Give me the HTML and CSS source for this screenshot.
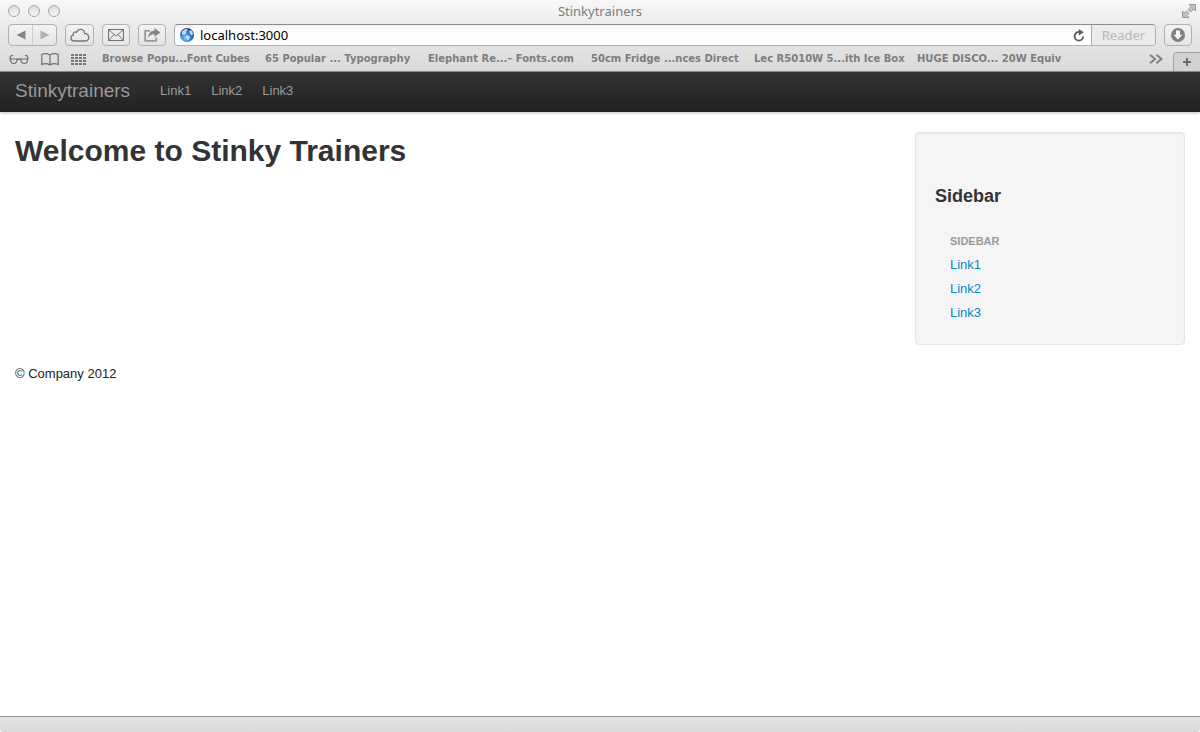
FILE: index.html
```html
<!DOCTYPE html>
<html lang="en">
<head>
<meta charset="utf-8">
<title>Stinkytrainers</title>
<link rel="stylesheet" href="styles.css">
</head>
<body>
<div class="window">
  <div class="chrome">
    <div class="titlebar">
      <div class="lights">
        <button class="light" aria-label="Close"></button>
        <button class="light" aria-label="Minimise"></button>
        <button class="light" aria-label="Zoom"></button>
      </div>
      <div class="window-title">Stinkytrainers</div>
      <button class="icon-button fullscreen" aria-label="Full screen">
        <svg width="16" height="16" viewBox="0 0 16 16" fill="#c0c0c0" stroke="#8c8c8c" stroke-width=".8"><path d="M8 1.500h6.500V8l-2-2-3 3L7 6.500l3-3zM1.500 8l2 2 2-2L8 10.500l-2 2 2 2H1.500z"/></svg>
      </button>
    </div>
    <div class="toolbar">
      <div class="history">
        <button class="nav-button" aria-label="Back"><svg width="10" height="10" viewBox="0 0 10 10"><path d="M9.500.5v9L.5 5z" fill="#858585"/></svg></button>
        <button class="nav-button next" aria-label="Forward"><svg width="10" height="10" viewBox="0 0 10 10"><path d="M.5.5v9l9-4.500z" fill="#b2b2b2"/></svg></button>
      </div>
      <button class="tool cloud" aria-label="iCloud tabs"><svg width="20" height="14" viewBox="0 0 20 14" fill="none" stroke="#777" stroke-width="1.300"><path d="M4.500 13C.2 13-.2 7.800 3.300 7.200 2.700 4.700 5 3.300 6.600 4.300 8 .2 14.300.300 14.500 5.300c4.400.1 6.600 7 .7 7.700z"/></svg></button>
      <button class="tool mail" aria-label="Mail"><svg width="16" height="12" viewBox="0 0 16 12" fill="none" stroke="#757575"><path d="M.5.5h15v11H.5z" stroke-width="1.200"/><path d="M1 1l7 6 7-6M1 11l5-5.500M15 11l-5-5.500"/></svg></button>
      <button class="tool share" aria-label="Share"><svg width="17" height="14" viewBox="0 0 17 14"><path d="M6 2.800H1.200v10h11V9.500" fill="none" stroke="#999" stroke-width="1.800"/><path d="M10.500 0l6 4.500-6 4.300V6.300C7.800 6.200 5.800 7.200 4.300 10 4.300 5.500 6.600 2.500 10.500 2.400z" fill="#858585"/></svg></button>
      <div class="address">
        <svg class="globe" width="14" height="14" viewBox="0 0 14 14">
          <defs><radialGradient id="sea" cx=".4" cy=".7" r=".65"><stop offset="0" stop-color="#7ccbfb"/><stop offset=".6" stop-color="#2f7bd2"/><stop offset="1" stop-color="#183f91"/></radialGradient></defs>
          <circle cx="7" cy="7" r="7" fill="url(#sea)"/><path d="M2 3.500Q4.500.5 7 1l1 1.500-2 1 .5 1.500-2.500 2-2-1zM9 3l2-1q2 2 2 4.500l-1.500 1-1.500-2zM6 7.500l3 .5 1 1.500L8 12.500l-1.500-2z" fill="#dcecf6" opacity=".85"/>
        </svg>
        <input class="url" type="text" value="localhost:3000" aria-label="Address">
        <button class="icon-button reload" aria-label="Reload"><svg width="12" height="13" viewBox="0 0 12 13"><path d="M7 3H5.500A4.300 4.300 0 1 0 10.200 7.500" fill="none" stroke="#5c5c5c" stroke-width="1.900"/><path d="M5.800 0l5 3.200-5 3.300z" fill="#5c5c5c"/></svg></button>
        <button class="reader" disabled>Reader</button>
      </div>
      <button class="tool downloads" aria-label="Downloads"><svg width="14" height="14" viewBox="0 0 14 14"><circle cx="7" cy="7" r="7" fill="#808080"/><path d="M5 2.500h4v4.200h2.500L7 11.500 2.500 6.700H5z" fill="#f4f4f4"/></svg></button>
    </div>
    <div class="bookmarks">
      <button class="icon-button" aria-label="Reading list"><svg width="20" height="11" viewBox="0 0 20 11" fill="none" stroke="#707070" stroke-width="1.200"><path d="M4 1.500Q1 1 1 5M16 1.500q3-.5 3 3.500M8 6q2-2 4 0M.5 5h8M11.500 5h8"/><path d="M1.500 5q0 4.500 3.200 4.500T8.200 5M11.800 5q.2 4.500 3.500 4.500T18.500 5"/></svg></button>
      <button class="icon-button" aria-label="Bookmarks"><svg width="18" height="13" viewBox="0 0 18 13" fill="none" stroke="#707070" stroke-width="1.200"><path d="M9 2Q5-.5.8 1.500v10Q5 9.500 9 12q4-2.500 8.200-.5v-10Q13-.5 9 2v10"/></svg></button>
      <button class="icon-button" aria-label="Top sites"><svg width="15" height="11" viewBox="0 0 15 11" stroke="#777" stroke-width="2" stroke-dasharray="3 1"><path d="M0 1h15M0 4h15M0 7h15M0 10h15"/></svg></button>
      <nav class="bookmark-links" aria-label="Bookmarks">
        <a href="#">Browse Popu...Font Cubes</a>
        <a href="#">65 Popular ... Typography</a>
        <a href="#">Elephant Re...– Fonts.com</a>
        <a href="#">50cm Fridge ...nces Direct</a>
        <a href="#">Lec R5010W 5...ith Ice Box</a>
        <a href="#">HUGE DISCO... 20W Equiv</a>
      </nav>
      <button class="icon-button more" aria-label="More bookmarks"><svg width="14" height="10" viewBox="0 0 14 10" fill="none" stroke="#808080" stroke-width="2"><path d="M1 .8L6 5 1 9.200M7.500.8l5 4.200-5 4.200"/></svg></button>
      <button class="new-tab" aria-label="New tab"><svg width="8" height="8" viewBox="0 0 8 8" stroke="#6c6c6c" stroke-width="2"><path d="M0 4h8M4 0v8"/></svg></button>
    </div>
  </div>
  <div class="page">
    <header class="navbar">
      <a class="brand" href="#">Stinkytrainers</a>
      <nav class="nav"><a href="#">Link1</a><a href="#">Link2</a><a href="#">Link3</a></nav>
    </header>
    <div class="content">
      <main class="main"><h1>Welcome to Stinky Trainers</h1></main>
      <aside class="well">
        <h3>Sidebar</h3>
        <ul class="nav-list">
          <li class="nav-header">Sidebar</li>
          <li><a href="#">Link1</a></li>
          <li><a href="#">Link2</a></li>
          <li><a href="#">Link3</a></li>
        </ul>
      </aside>
    </div>
    <footer class="footer">© Company 2012</footer>
  </div>
  <div class="statusbar"></div>
</div>
</body>
</html>
```
FILE: styles.css
```css
* { box-sizing: border-box; }
body {
  margin: 0;
  background: #fff;
  color: #333;
  font: 13px/18px "Liberation Sans", Arial, sans-serif;
}
a { text-decoration: none; color: #08c; }
button { margin: 0; padding: 0; border: 0; background: none; }
svg { display: block; }
.window { display: flex; flex-direction: column; min-height: 100vh; }

.chrome {
  background: linear-gradient(#f8f8f8, #ebebeb 34%, #dadada);
  border-bottom: 1px solid #8f8f8f;
  border-radius: 4px 4px 0 0;
  font-family: "Noto Sans", "Open Sans", sans-serif;
}
.titlebar {
  display: grid;
  grid-template-columns: 1fr auto 1fr;
  align-items: center;
  height: 24px;
  padding: 0 3px 2px 8px;
}
.lights { display: flex; gap: 8px; }
.light {
  width: 12px;
  height: 12px;
  border: 1px solid #a6a6a6;
  border-radius: 50%;
  background: linear-gradient(#dedede, #f6f6f6);
}
.window-title { margin-right: 5px; color: #7d7d7d; font-size: 13px; }
.fullscreen { justify-self: end; }

.toolbar { display: flex; height: 22px; padding: 0 8px; }
.history, .tool {
  border: 1px solid #b0b0b0;
  border-radius: 4px;
  background: linear-gradient(#f3f3f3, #e4e4e4);
}
.history { display: flex; width: 49px; }
.nav-button { flex: 1; display: flex; align-items: center; justify-content: center; }
.next { border-left: 1px solid #ccc; }
.tool { display: flex; align-items: center; justify-content: center; width: 28px; margin-left: 8px; }
.cloud { width: 29px; }
.address {
  flex: 1;
  display: flex;
  align-items: center;
  margin-left: 8px;
  border: 1px solid #b0b0b0;
  border-top-color: #8b8b8b;
  border-radius: 4px;
  background: linear-gradient(#f3f3f3, #fff 40%);
  overflow: hidden;
}
.globe { margin-left: 5px; }
.url {
  flex: 1;
  min-width: 0;
  height: 20px;
  padding: 0 0 0 6px;
  border: 0;
  outline: 0;
  background: none;
  color: #000;
  font: 13px "Noto Sans", "Open Sans", sans-serif;
}
.reload { margin-right: 6px; }
.reader {
  align-self: stretch;
  width: 64px;
  border-left: 1px solid #a9a9a9;
  background: #ebebeb;
  color: #b9b9b9;
  font: 13px "Noto Sans", "Open Sans", sans-serif;
}

.bookmarks { display: flex; align-items: center; gap: 12px; height: 25px; padding: 1px 0 0 9px; }
.bookmark-links {
  flex: 1;
  display: grid;
  grid-template-columns: repeat(6, 148px);
  gap: 15px;
  margin-left: 4px;
  overflow: hidden;
}
.bookmark-links a {
  color: #7d7d7d;
  font-family: "DejaVu Sans", sans-serif;
  font-size: 10px;
  font-weight: 700;
  white-space: nowrap;
}
.more { margin-right: -2px; }
.new-tab {
  display: flex;
  align-items: center;
  justify-content: center;
  align-self: flex-end;
  width: 27px;
  height: 19px;
  border: 1px solid #a3a3a3;
  border-width: 1px 0 0 1px;
  border-radius: 4px 0 0 0;
  background: #d2d2d2;
}

.page { flex: 1; }
.navbar {
  display: flex;
  align-items: center;
  height: 40px;
  padding: 0 15px 2px;
  background: linear-gradient(#333, #222);
  box-shadow: 0 1px 3px rgba(0, 0, 0, .25);
}
.brand { margin-right: 30px; color: #999; font-size: 19px; line-height: 24px; }
.nav { display: flex; gap: 20px; }
.nav a { color: #999; }
.content { display: flex; gap: 20px; padding: 20px 15px 0; }
.main { flex: 1; }
h1 { margin: 0; font-size: 30px; line-height: 38px; }
.well {
  flex: 0 0 270px;
  padding: 49px 19px 19px;
  border: 1px solid #e5e5e5;
  border-radius: 4px;
  background: #f5f5f5;
  box-shadow: inset 0 1px 1px rgba(0, 0, 0, .05);
}
h3 { margin: 0 0 18px; font-size: 18px; line-height: 29px; }
.nav-list { margin: 0; padding: 0 15px; list-style: none; line-height: 24px; }
.nav-header { color: #999; font-size: 11px; font-weight: 700; text-transform: uppercase; }
.footer { padding: 20px 15px; color: #222; }
.statusbar {
  height: 16px;
  border-top: 1px solid #999;
  background: linear-gradient(#e4e4e4, #d9d9d9);
  border-radius: 0 0 3px 3px;
}
```
